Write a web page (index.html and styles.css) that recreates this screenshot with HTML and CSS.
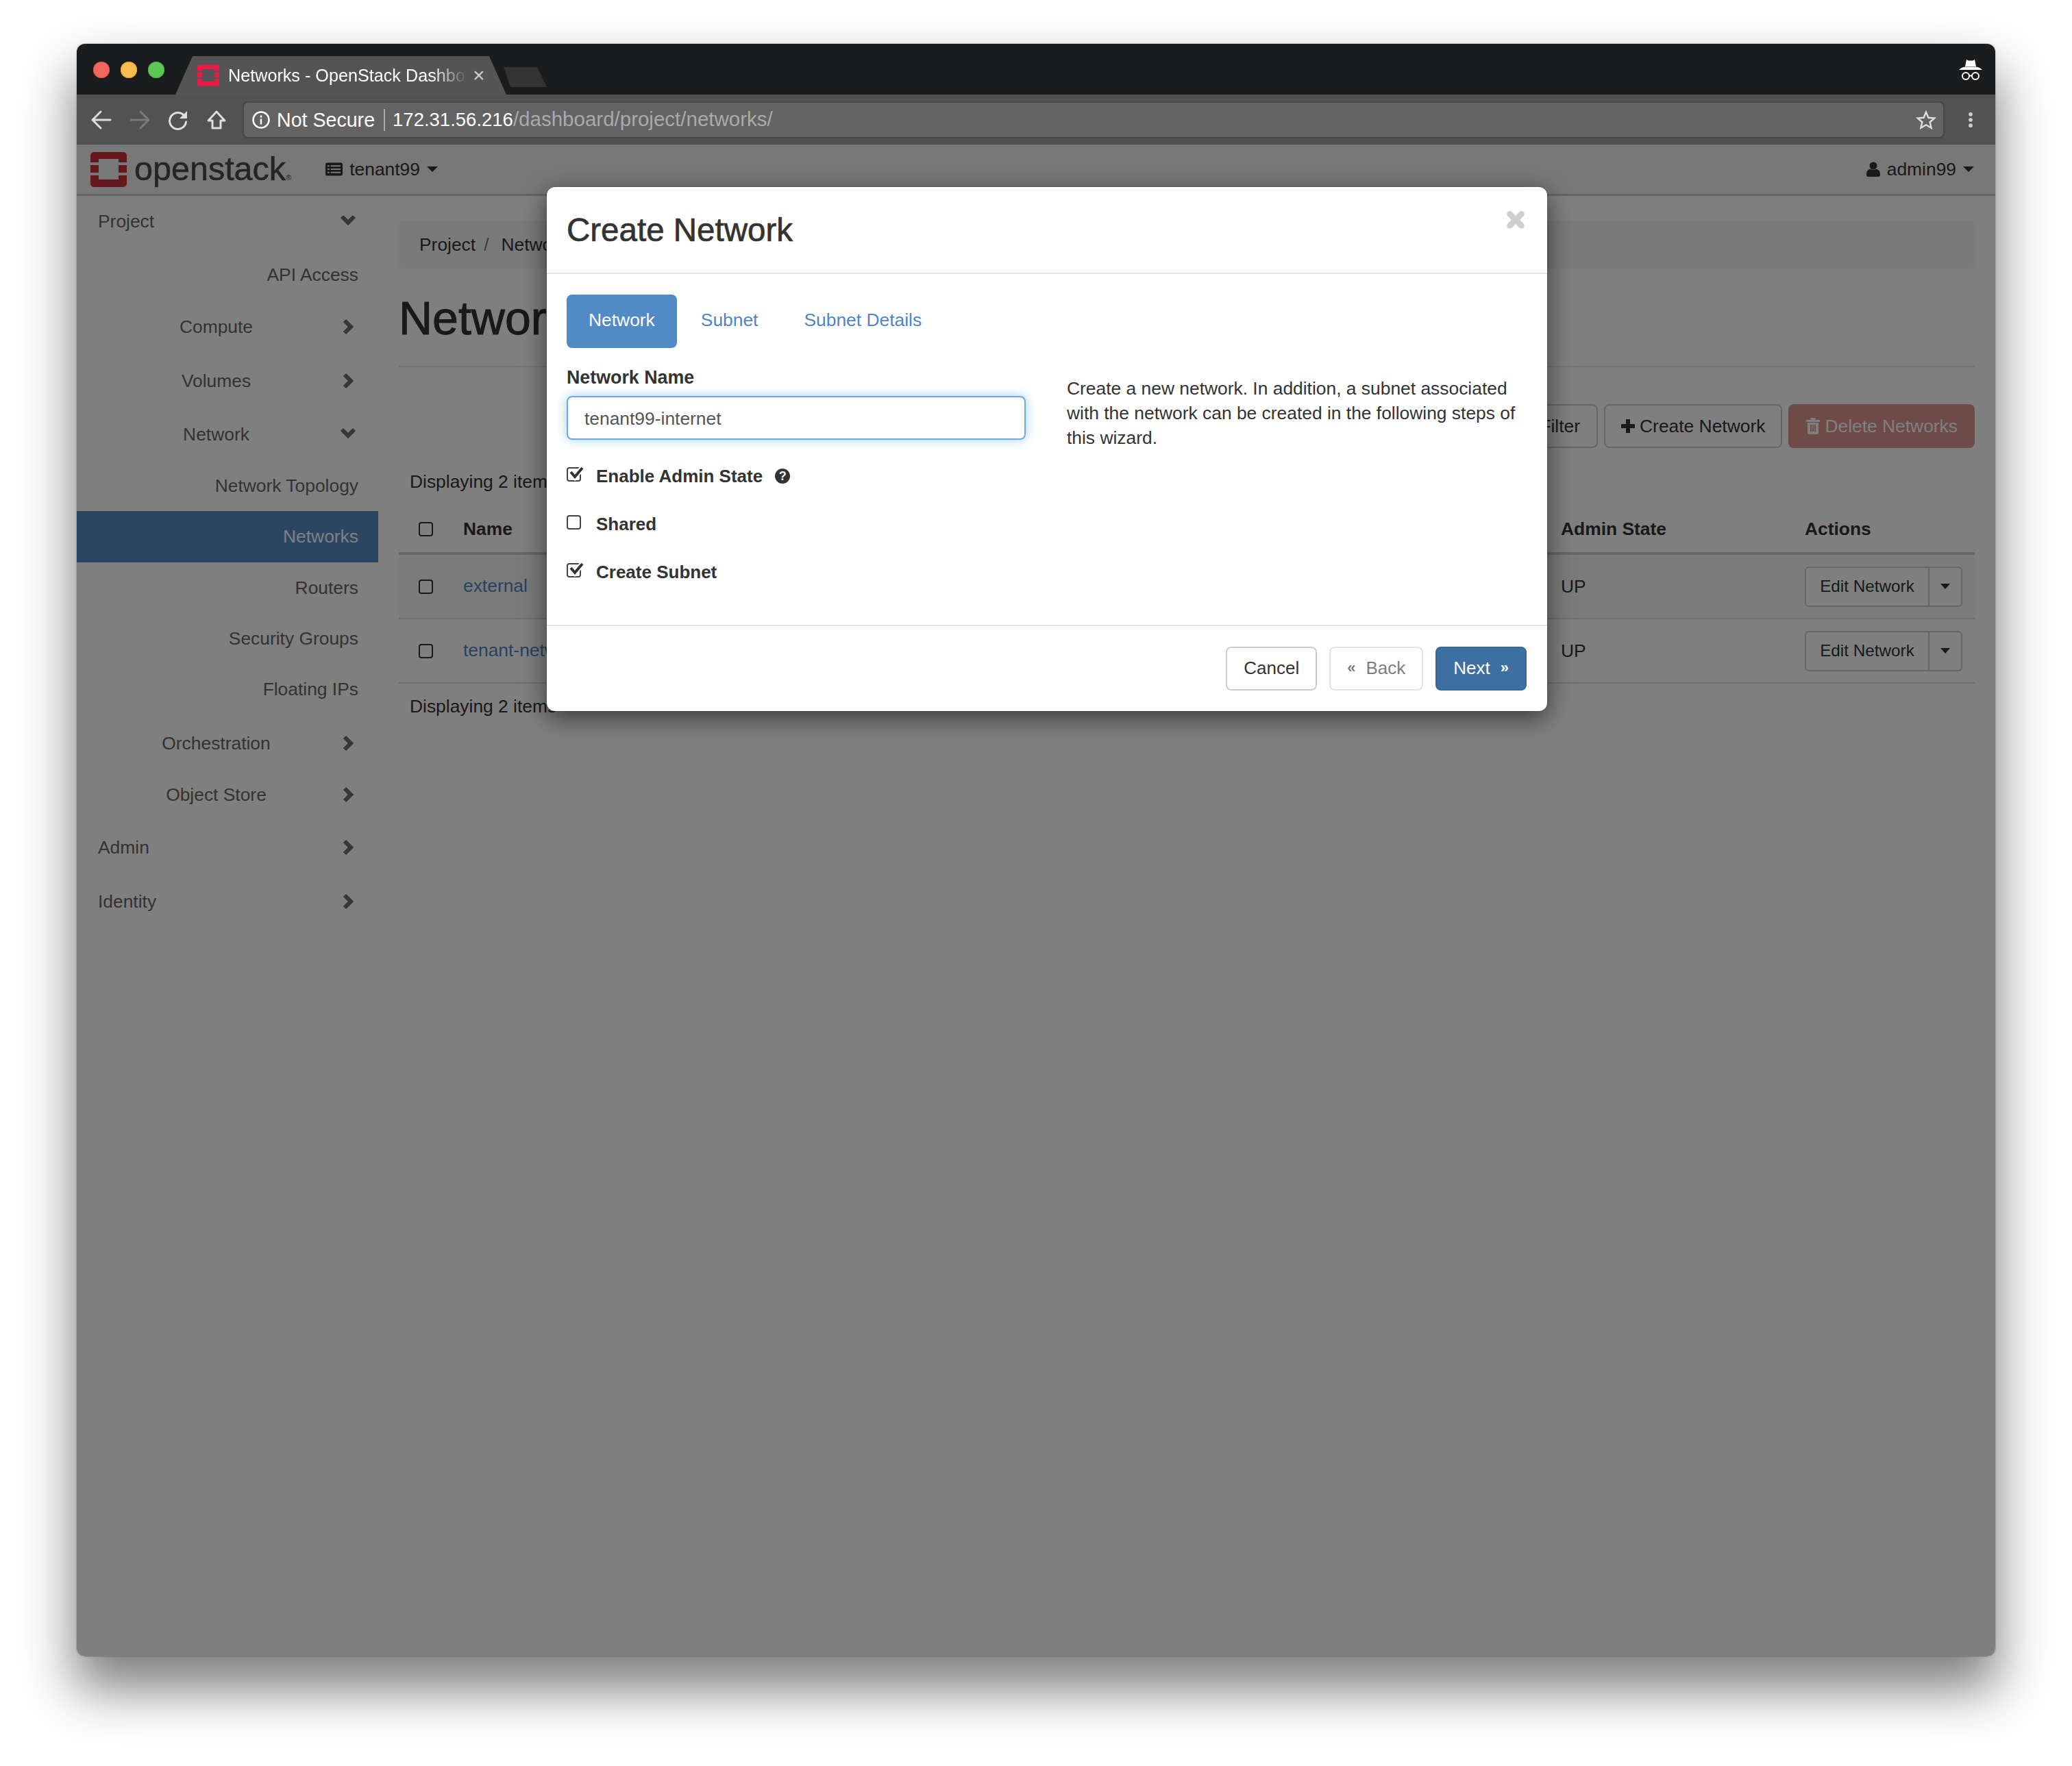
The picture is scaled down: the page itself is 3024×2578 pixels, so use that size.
FILE: index.html
```html
<!DOCTYPE html>
<html lang="en">
<head>
<meta charset="utf-8">
<title>Networks - OpenStack Dashboard</title>
<link rel="stylesheet" href="styles.css">
</head>
<body>
<div class="window">
  <div class="tabstrip">
    <div class="lights"><i class="light red"></i><i class="light amber"></i><i class="light green"></i></div>
    <div class="tab">
      <svg class="favicon" viewBox="0 0 53 51"><path class="fav-fill" d="M0 15V5a5 5 0 0 1 5-5h43a5 5 0 0 1 5 5v10H41v-5H12v5zM0 19h12v11H0zM41 19h12v11H41zM0 34h12v6h29v-6h12v12a5 5 0 0 1-5 5H5a5 5 0 0 1-5-5z"/></svg>
      <span class="tab-title">Networks - OpenStack Dashboard</span>
      <span class="tab-close">×</span>
    </div>
    <div class="newtab"></div>
    <svg class="incognito" viewBox="0 0 34 31">
      <path class="inc-fill" d="M11 0l3 1.500h6l3-1.500 2 10H9zM0 15c3-3 6-4 9-4.500h16c3 .5 6 1.500 9 4.500z"/>
      <circle class="inc-ring" cx="10" cy="24" r="5"/><circle class="inc-ring" cx="24" cy="24" r="5"/>
      <path class="inc-ring" d="M15 23.500h4"/>
    </svg>
  </div>
  <div class="toolbar">
    <svg class="tb-icon" viewBox="0 0 32 32"><path class="ic-light" d="M29 16H5M15 4L3 16l12 12"/></svg>
    <svg class="tb-icon" viewBox="0 0 32 32"><path class="ic-dim" d="M3 16h24M17 4l12 12-12 12"/></svg>
    <svg class="tb-icon" viewBox="0 0 32 32"><path class="ic-light" d="M25 10A12 12 0 1 0 27.500 19"/><path class="ic-solid" d="M29 3v11H18z"/></svg>
    <svg class="tb-icon" viewBox="0 0 32 32"><path class="ic-light" d="M16 4L4 17h6v11h12V17h6z"/></svg>
    <div class="omnibox">
      <svg class="info" viewBox="0 0 26 26"><circle cx="13" cy="13" r="11.500"/><path d="M13 11.500v8M13 6.500v3"/></svg>
      <span class="secure">Not Secure</span>
      <span class="omni-div"></span>
      <span class="url"><span class="host">172.31.56.216</span>/dashboard/project/networks/</span>
      <svg class="star" viewBox="0 0 32 32"><path d="M16 4l3.700 8.600 9.300.8-7 6.100 2.100 9.100-8.100-4.800-8.100 4.800 2.100-9.100-7-6.100 9.300-.8z"/></svg>
    </div>
    <svg class="menu" viewBox="0 0 32 32"><circle cx="16" cy="6" r="3.500"/><circle cx="16" cy="16" r="3.500"/><circle cx="16" cy="26" r="3.500"/></svg>
  </div>

  <div class="page">
    <header class="navbar">
      <svg class="logo" viewBox="0 0 53 51"><path class="logo-fill" d="M0 15V5a5 5 0 0 1 5-5h43a5 5 0 0 1 5 5v10H41v-5H12v5zM0 19h12v11H0zM41 19h12v11H41zM0 34h12v6h29v-6h12v12a5 5 0 0 1-5 5H5a5 5 0 0 1-5-5z"/></svg>
      <span class="wordmark">openstack<span class="reg">®</span></span>
      <div class="project-picker">
        <svg class="nav-ic" viewBox="0 0 26 20"><rect class="list-box" x="0" y="0" width="26" height="20" rx="3"/><path class="list-lines" d="M3 5h3M8 5h15M3 10h3M8 10h15M3 15h3M8 15h15"/></svg>
        <span>tenant99</span><i class="caret"></i>
      </div>
      <div class="user-menu">
        <svg class="user-ic" viewBox="0 0 20 22"><circle cx="10" cy="6" r="5.500"/><path d="M0 19c0-6 3-8 6-8 2.500 1.500 5.500 1.500 8 0 3 0 6 2 6 8 0 2-1 3-3 3H3c-2 0-3-1-3-3z"/></svg>
        <span>admin99</span><i class="caret"></i>
      </div>
    </header>
    <div class="layout">
      <nav class="sidebar">
        <div class="nav-row top"><span class="nav-label">Project</span><svg class="chev-down" viewBox="0 0 24 16"><path d="M3 3l9 9 9-9"/></svg></div>
        <div class="nav-row leaf"><span class="nav-label">API Access</span></div>
        <div class="nav-row sub"><span class="nav-label">Compute</span><svg class="chev-right" viewBox="0 0 16 24"><path d="M3 3l9 9-9 9"/></svg></div>
        <div class="nav-row sub"><span class="nav-label">Volumes</span><svg class="chev-right" viewBox="0 0 16 24"><path d="M3 3l9 9-9 9"/></svg></div>
        <div class="nav-row sub"><span class="nav-label">Network</span><svg class="chev-down" viewBox="0 0 24 16"><path d="M3 3l9 9 9-9"/></svg></div>
        <div class="nav-row leaf"><span class="nav-label">Network Topology</span></div>
        <div class="nav-row leaf active"><span class="nav-label">Networks</span></div>
        <div class="nav-row leaf"><span class="nav-label">Routers</span></div>
        <div class="nav-row leaf"><span class="nav-label">Security Groups</span></div>
        <div class="nav-row leaf"><span class="nav-label">Floating IPs</span></div>
        <div class="nav-row sub"><span class="nav-label">Orchestration</span><svg class="chev-right" viewBox="0 0 16 24"><path d="M3 3l9 9-9 9"/></svg></div>
        <div class="nav-row sub"><span class="nav-label">Object Store</span><svg class="chev-right" viewBox="0 0 16 24"><path d="M3 3l9 9-9 9"/></svg></div>
        <div class="nav-row top"><span class="nav-label">Admin</span><svg class="chev-right" viewBox="0 0 16 24"><path d="M3 3l9 9-9 9"/></svg></div>
        <div class="nav-row top"><span class="nav-label">Identity</span><svg class="chev-right" viewBox="0 0 16 24"><path d="M3 3l9 9-9 9"/></svg></div>
      </nav>
      <main class="content">
        <div class="breadcrumb"><span>Project</span><span class="crumb-sep">/</span><span>Network</span><span class="crumb-sep">/</span><span>Networks</span></div>
        <h1 class="page-title">Networks</h1>
        <div class="actions">
          <span class="btn">Filter</span>
          <span class="btn create"><svg class="btn-ic" viewBox="0 0 20 20"><path d="M7 0h6v7h7v6h-7v7H7v-7H0V7h7z"/></svg>Create Network</span>
          <span class="btn danger"><svg class="btn-ic trash" viewBox="0 0 20 24"><path d="M7 0h6l1 3h6v3H0V3h6zM2 7h16v15a2 2 0 0 1-2 2H4a2 2 0 0 1-2-2zM6 10v10h2V10zM9 10v10h2V10zM12 10v10h2V10z"/></svg>Delete Networks</span>
        </div>
        <div class="count">Displaying 2 items</div>
        <div class="table">
          <div class="tr thead">
            <div class="td cell-check"><span class="tbl-check"></span></div>
            <div class="td">Name</div>
            <div class="td">Admin State</div>
            <div class="td">Actions</div>
          </div>
          <div class="tr striped">
            <div class="td cell-check"><span class="tbl-check"></span></div>
            <div class="td"><a class="link">external</a></div>
            <div class="td">UP</div>
            <div class="td"><span class="split"><span class="split-main">Edit Network</span><span class="split-toggle"><i class="caret small"></i></span></span></div>
          </div>
          <div class="tr">
            <div class="td cell-check"><span class="tbl-check"></span></div>
            <div class="td"><a class="link">tenant-network</a></div>
            <div class="td">UP</div>
            <div class="td"><span class="split"><span class="split-main">Edit Network</span><span class="split-toggle"><i class="caret small"></i></span></span></div>
          </div>
        </div>
        <div class="count foot">Displaying 2 items</div>
      </main>
    </div>
    <div class="backdrop"></div>
    <section class="modal">
      <div class="modal-head">
        <h4 class="modal-title">Create Network</h4>
        <svg class="modal-close" viewBox="0 0 26 26"><path d="M4.500 4.500l17 17M21.500 4.500l-17 17"/></svg>
      </div>
      <div class="modal-body">
        <div class="pills">
          <span class="pill current">Network</span>
          <span class="pill">Subnet</span>
          <span class="pill">Subnet Details</span>
        </div>
        <div class="form-cols">
          <div class="form-main">
            <label class="field-label">Network Name</label>
            <div class="text-input">tenant99-internet</div>
            <div class="check-row first">
              <span class="box"><svg class="tick" viewBox="0 0 26 22"><path class="tick-gap" d="M6 9l6 7L23 3"/><path class="tick-mark" d="M6 9l6 7L23 3"/></svg></span>
              <span>Enable Admin State</span><span class="help">?</span>
            </div>
            <div class="check-row"><span class="box"></span><span>Shared</span></div>
            <div class="check-row">
              <span class="box"><svg class="tick" viewBox="0 0 26 22"><path class="tick-gap" d="M6 9l6 7L23 3"/><path class="tick-mark" d="M6 9l6 7L23 3"/></svg></span>
              <span>Create Subnet</span>
            </div>
          </div>
          <p class="form-help">Create a new network. In addition, a subnet associated with the network can be created in the following steps of this wizard.</p>
        </div>
      </div>
      <div class="modal-foot">
        <span class="mbtn">Cancel</span>
        <span class="mbtn off"><b class="arrows">«</b>Back</span>
        <span class="mbtn primary">Next<b class="arrows">»</b></span>
      </div>
    </section>
  </div>
</div>
</body>
</html>
```
FILE: styles.css
```css
* { box-sizing: border-box; }
html, body { margin: 0; background: #fff; }
body {
  width: 3024px; height: 2578px; overflow: hidden;
  padding: 64px 112px 160px;
  font-family: "Liberation Sans", Arial, sans-serif;
  font-size: 26.400px; line-height: 36px; color: #333;
}
.window {
  width: 2800px; height: 2354px;
  display: flex; flex-direction: column;
  border-radius: 12px; overflow: hidden;
  box-shadow: 0 0 2px rgba(0,0,0,.45), 0 44px 76px 4px rgba(0,0,0,.5);
}

/* browser chrome */
.tabstrip { height: 74px; flex: none; background: #1b1c1e; display: flex; align-items: flex-end; }
.lights { align-self: flex-start; margin: 26px 0 0 24px; display: flex; gap: 16px; }
.light { width: 24px; height: 24px; border-radius: 50%; display: block; }
.red { background: #f2685f; box-shadow: inset 0 0 0 1px #dd4f48; }
.amber { background: #f7bd4f; box-shadow: inset 0 0 0 1px #dea43a; }
.green { background: #5cc757; box-shadow: inset 0 0 0 1px #4bad46; }
.tab {
  width: 483px; height: 56px; margin-left: 16px; padding-left: 32px;
  background: #545454; display: flex; align-items: center; color: #fff;
  clip-path: polygon(0 100%, 25px 0, 458px 0, 483px 100%);
}
.favicon { width: 32px; height: 32px; flex: none; }
.fav-fill { fill: #ed1944; }
.tab-title {
  margin-left: 13px; width: 349px; white-space: nowrap; overflow: hidden;
  font-size: 25.200px; line-height: 32px; color: #fff;
  -webkit-mask-image: linear-gradient(to right, #000 85%, transparent 100%);
  mask-image: linear-gradient(to right, #000 85%, transparent 100%);
}
.tab-close { margin-left: 8px; font-size: 30px; line-height: 32px; color: #ccc; }
.newtab {
  width: 63px; height: 29px; margin: 0 0 11px -4px; background: #333;
  clip-path: polygon(0 0, 49px 0, 63px 100%, 10px 100%);
}
.incognito { width: 34px; height: 31px; margin: 0 19px 20px auto; }
.inc-fill { fill: #fff; }
.inc-ring { fill: none; stroke: #fff; stroke-width: 2; }

.toolbar {
  height: 73px; flex: none; background: #525252;
  display: flex; align-items: center; gap: 24px; padding: 0 20px;
}
.tb-icon { width: 32px; height: 32px; flex: none; }
.ic-light, .ic-dim { fill: none; stroke-width: 3; stroke-linecap: round; stroke-linejoin: round; }
.ic-light { stroke: #ddd; }
.ic-dim { stroke: #7a7a7a; }
.ic-solid { fill: #ddd; }
.omnibox {
  flex: 1; height: 54px; margin-left: -2px; margin-right: -2px; padding: 0 10px 0 12px;
  background: #636363; border: 2px solid #484848; border-radius: 8px;
  display: flex; align-items: center; color: #fff; font-size: 28.600px; white-space: nowrap;
}
.info { width: 26px; height: 26px; flex: none; fill: none; stroke: #fff; stroke-width: 2.500; }
.secure { margin-left: 10px; }
.omni-div { width: 2px; height: 32px; background: #aaa; margin: 0 11px 0 13px; }
.url { color: #aaa; font-size: 29.500px; }
.host { color: #fff; font-size: 27.500px; }
.star { width: 30px; height: 30px; margin-left: auto; fill: none; stroke: #ddd; stroke-width: 2.600; }
.menu { width: 32px; height: 32px; flex: none; fill: #ccc; transform: scale(.82); }

/* dashboard page */
.page { flex: 1; position: relative; background: #fff; display: flex; flex-direction: column; min-height: 0; }
.navbar {
  height: 75px; flex: none; background: #f0f0f0; border-bottom: 3px solid #cbcbcb;
  display: flex; align-items: center; padding: 0 31px 0 20px; color: #333;
}
.logo { width: 53px; height: 51px; flex: none; }
.logo-fill { fill: #cb3038; }
.wordmark {
  margin-left: 11px; font-size: 48.500px; line-height: 52px; color: #4f4b49; position: relative; top: -1px;
  -webkit-text-stroke: .5px #4f4b49;
}
.reg { font-size: 11px; line-height: 1; -webkit-text-stroke: 0; }
.project-picker { margin-left: 50px; display: flex; align-items: center; gap: 10px; }
.nav-ic { width: 25px; height: 20px; }
.list-box { fill: #333; }
.list-lines { stroke: #f0f0f0; stroke-width: 2; fill: none; }
.caret {
  display: block; width: 0; height: 0; margin-left: 0;
  border-left: 8px solid transparent; border-right: 8px solid transparent; border-top: 8px solid #333;
}
.user-menu { margin-left: auto; display: flex; align-items: center; gap: 10px; }
.user-ic { width: 20px; height: 22px; fill: #333; }

.layout { flex: 1; display: flex; min-height: 0; }
.sidebar {
  width: 440px; flex: none; color: #666;
  display: grid; align-content: start;
  grid-template-rows: 78px 76px 79px 78px 75px 74px 75px 74px 74px 79px 75px 77px 79px 78px;
}
.nav-row { display: flex; align-items: flex-start; padding: 19px 24px 0 31px; }
.nav-label { flex: 1; }
.sub .nav-label { text-align: center; }
.leaf .nav-label { text-align: right; padding-right: 5px; }
.active { background: #568cc6; color: #fff; padding-top: 19px; }
.chev-down, .chev-right { fill: none; stroke: #6e6e6e; stroke-width: 6; margin: auto; }
.chev-down { width: 24px; height: 16px; margin: 8px 8px 0 8px; }
.chev-right { width: 16px; height: 24px; margin: 6px 12px 0 12px; }

.content { flex: 1; padding: 36px 30px 0; min-width: 0; color: #333; }
.breadcrumb {
  height: 70px; background: #f5f5f5; border-radius: 8px; padding-left: 30px;
  display: flex; align-items: center; gap: 12px; color: #333;
}
.crumb-sep { color: #777; margin-right: 6px; }
.page-title {
  margin: 32px 0 0; height: 112px; padding-bottom: 30px; border-bottom: 2px solid #e8e8e8;
  font-size: 68px; line-height: 80px; font-weight: 400; color: #333;
  -webkit-text-stroke: 1px #333;
}
.actions { margin-top: 54px; display: flex; justify-content: flex-end; gap: 9px; }
.btn {
  height: 64px; padding: 0 24px; display: flex; align-items: center;
  background: #fff; border: 2px solid #ccc; border-radius: 8px; color: #333;
}
.btn.create { padding: 0 23px; }
.btn-ic { width: 20px; height: 20px; margin-right: 7px; fill: #333; }
.danger { background: #dd9490; border-color: #dd9490; color: #fff; padding: 0 23px 0 24px; }
.danger .btn-ic { fill: #fff; height: 24px; }
.count { margin-top: 31px; padding-left: 16px; color: #333; }
.count.foot { margin-top: 15px; }
.table { margin-top: 15px; }
.tr {
  display: grid; grid-template-columns: 80px 1600px 356px 264px; align-items: center;
  height: 94px; border-bottom: 2px solid #ddd;
}
.thead { height: 74px; border-bottom: 4px solid #ccc; font-weight: 700; padding-top: 2px; }
.striped { background: #f7f7f7; }
.td { padding-left: 14px; }
.td:nth-child(n+3) { padding-left: 16px; }
.cell-check { padding-left: 29px; display: flex; }
.tbl-check { width: 21px; height: 21px; border: 2px solid #333; border-radius: 4px; background: #fff; }
.link { color: #4f86bf; position: relative; top: -1px; }
.split { display: inline-flex; height: 59px; border: 2px solid #ccc; border-radius: 6px; font-size: 24.300px; background: #fff; }
.split-main { width: 178px; text-align: center; line-height: 53px; }
.split-toggle { width: 48px; border-left: 2px solid #ccc; display: flex; align-items: center; justify-content: center; }
.caret.small { border-left-width: 7px; border-right-width: 7px; border-top-width: 8px; }

.backdrop { position: absolute; inset: 0; background: rgba(0,0,0,.5); }
.modal {
  position: absolute; left: 686px; top: 62px; width: 1460px; height: 765px;
  background: #fff; border-radius: 12px;
  box-shadow: 0 10px 36px rgba(0,0,0,.55), 0 0 2px rgba(0,0,0,.4);
  display: flex; flex-direction: column;
}
.modal-head {
  height: 127px; flex: none; padding: 0 33px 0 29px;
  border-bottom: 2px solid #e5e5e5; display: flex; align-items: flex-start; justify-content: space-between;
}
.modal-title {
  margin: 32px 0 0; font-size: 47.500px; line-height: 62px; font-weight: 400; color: #333;
  -webkit-text-stroke: .7px #333;
}
.modal-close { width: 26px; height: 26px; margin-top: 35px; fill: none; stroke: #cfcfcf; stroke-width: 8.500; stroke-linecap: round; }
.modal-body { padding: 30px 30px 0 29px; }
.pills { display: flex; gap: 3px; }
.pill { height: 78px; padding: 0 32px 4px; display: flex; align-items: center; border-radius: 8px; color: #4f86c6; }
.pill.current { background: #528ac6; color: #fff; }
.form-cols { display: flex; }
.form-main { width: 670px; flex: none; padding-top: 25px; }
.field-label { display: block; font-weight: 700; color: #333; margin-bottom: 9px; font-size: 26.800px; }
.text-input {
  height: 64px; padding: 0 24px; line-height: 62px; color: #555; background: #fff;
  border: 2px solid #6fa9e0; border-radius: 8px;
  box-shadow: 0 0 16px rgba(102,175,233,.6), inset 0 2px 2px rgba(0,0,0,.05);
}
.check-row { display: flex; align-items: center; margin-top: 34px; font-size: 26px; font-weight: 700; height: 36px; }
.check-row.first { margin-top: 35px; }
.box {
  width: 21px; height: 21px; flex: none; margin: -5px 22px 0 0; position: relative;
  border: 2px solid #444; border-radius: 4px; background: #fff;
}
.tick { position: absolute; left: -2px; top: -4px; width: 26px; height: 22px; fill: none; overflow: visible; }
.tick-gap { stroke: #fff; stroke-width: 8; }
.tick-mark { stroke: #333; stroke-width: 4; }
.help {
  width: 22px; height: 22px; margin-left: 18px; border-radius: 50%; background: #333; color: #fff;
  font-size: 18px; line-height: 22px; text-align: center;
}
.form-help { width: 660px; margin: 41px 0 0 60px; color: #333; }
.modal-foot {
  margin-top: auto; height: 126px; flex: none; padding: 30px 30px 0 0;
  border-top: 2px solid #e5e5e5; display: flex; justify-content: flex-end; gap: 18px;
}
.mbtn {
  height: 64px; padding: 0 24px 2px; display: flex; align-items: center; gap: 15px; font-size: 26px;
  border: 2px solid #ccc; border-radius: 8px; color: #333; background: #fff;
}
.mbtn.off { color: #7e7e7e; border-color: #e2e2e2; }
.mbtn.primary { background: #3d6fa3; border-color: #386695; color: #fff; }
.arrows { font-size: 22px; font-weight: 700; }
```
